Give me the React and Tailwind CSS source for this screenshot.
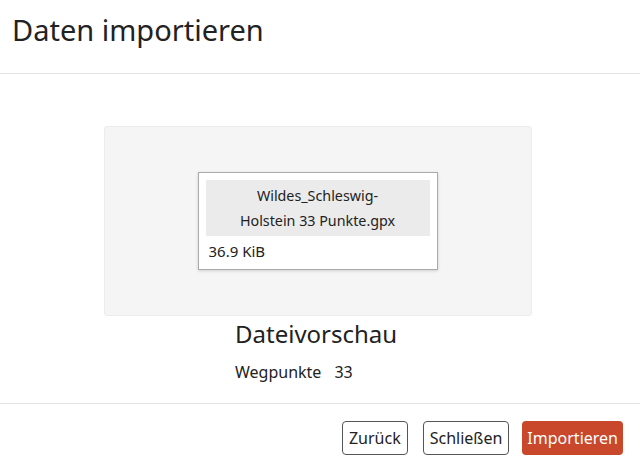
export default function App() {
  return (
    <div
      className="w-[640px] h-[473px] bg-white text-[#222] flex flex-col overflow-hidden"
      style={{ fontFamily: '"Noto Sans", sans-serif' }}
    >
      {/* Header */}
      <div className="h-[74px] border-b border-[#e3e3e3] px-[12px] pt-[11px]">
        <h1 className="text-[29px] leading-[38px] text-[#222]">Daten importieren</h1>
      </div>

      {/* Body */}
      <div className="flex-1 flex flex-col pl-[104px] pt-[52px]">
        <div className="w-[428px] h-[190px] bg-[#f5f5f5] border border-[#ececec] rounded-[3px] flex items-center justify-center">
          <div className="w-[240px] bg-white border border-[#aaa] shadow-[0_1px_3px_rgba(0,0,0,0.15)] p-[7px] pb-[4px] mr-[1px]">
            <div className="bg-[#ebebeb] h-[56px] flex flex-col items-center justify-center text-[14.3px] leading-[25px] text-[#222]">
              <span>Wildes_Schleswig-</span>
              <span>Holstein 33 Punkte.gpx</span>
            </div>
            <div className="text-[15px] leading-[28px] pl-[3px] pt-[1px]">36.9 KiB</div>
          </div>
        </div>
        <div className="pl-[131px]">
          <div className="text-[24px] leading-[34px] mt-[1px]">Dateivorschau</div>
          <div className="text-[16px] leading-[24px] mt-[9px] flex gap-[13px]">
            <span>Wegpunkte</span>
            <span>33</span>
          </div>
        </div>
      </div>

      {/* Footer */}
      <div className="h-[70px] border-t border-[#e3e3e3] flex items-center justify-end pr-[17px] pb-[2px]">
        <button className="h-[34px] px-[6px] border border-[#555] rounded-[4px] text-[16px] text-[#222] bg-white">
          Zurück
        </button>
        <button className="ml-[15px] h-[34px] px-[6px] border border-[#555] rounded-[4px] text-[16px] text-[#222] bg-white">
          Schließen
        </button>
        <button className="ml-[13px] h-[34px] px-[5px] rounded-[4px] text-[16px] text-white bg-[#c9472a]">
          Importieren
        </button>
      </div>
    </div>
  );
}
